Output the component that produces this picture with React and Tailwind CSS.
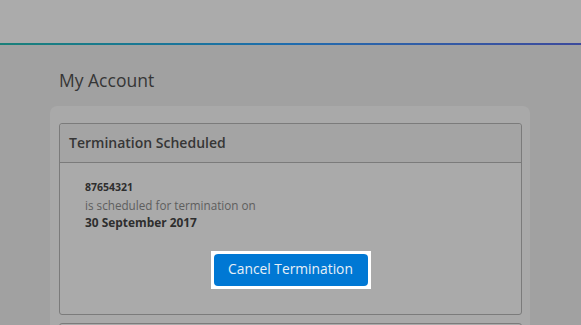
export default function App() {
  return (
    <div
      className="w-[581px] h-[325px] overflow-hidden bg-[#a1a1a1] flex flex-col"
      style={{ fontFamily: '"Open Sans", "Noto Sans", sans-serif' }}
    >
      <div className="h-[43px] shrink-0 bg-[#ababab]" />
      <div className="h-[2px] shrink-0 bg-gradient-to-r from-[#1a8079] via-[#1f6cae] to-[#3c4a9c]" />
      <div className="pl-[59px] pt-[23px] h-[61px] shrink-0">
        <h1 className="text-[17.5px] leading-[24px] text-[#363636]">My Account</h1>
      </div>
      <div className="ml-[50px] w-[480px] rounded-t-[7px] bg-[#a9a9a9] pl-[9px] pr-[8px] pt-[17px] flex-1">
        <div className="border border-[#7b7b7b] rounded-[3px] bg-[#aaaaaa]">
          <div className="bg-[#a4a4a4] border-b border-[#7b7b7b] px-[9px] py-[9px] rounded-t-[3px]">
            <div className="text-[14px] leading-[20px] font-semibold text-[#363636]">
              Termination Scheduled
            </div>
          </div>
          <div className="pt-[16px] pb-[25px] px-[25px]">
            <div className="leading-[17.5px]">
              <div className="text-[10.5px] font-bold text-[#2e2e2e]">87654321</div>
              <div className="text-[11.7px] text-[#5e5e5e]">is scheduled for termination on</div>
              <div className="text-[11.9px] font-bold text-[#2e2e2e]">30 September 2017</div>
            </div>
            <div className="flex justify-center mt-[19px]">
              <div className="bg-white p-[3px]">
                <button className="w-[154px] h-[32px] rounded-[4px] bg-[#0078d4] text-[13.8px] text-[#e8f0f7] flex items-center justify-center">
                  Cancel Termination
                </button>
              </div>
            </div>
          </div>
        </div>
        <div className="mt-[8px] border border-[#7b7b7b] rounded-[3px] bg-[#aaaaaa] h-[40px]" />
      </div>
    </div>
  );
}
